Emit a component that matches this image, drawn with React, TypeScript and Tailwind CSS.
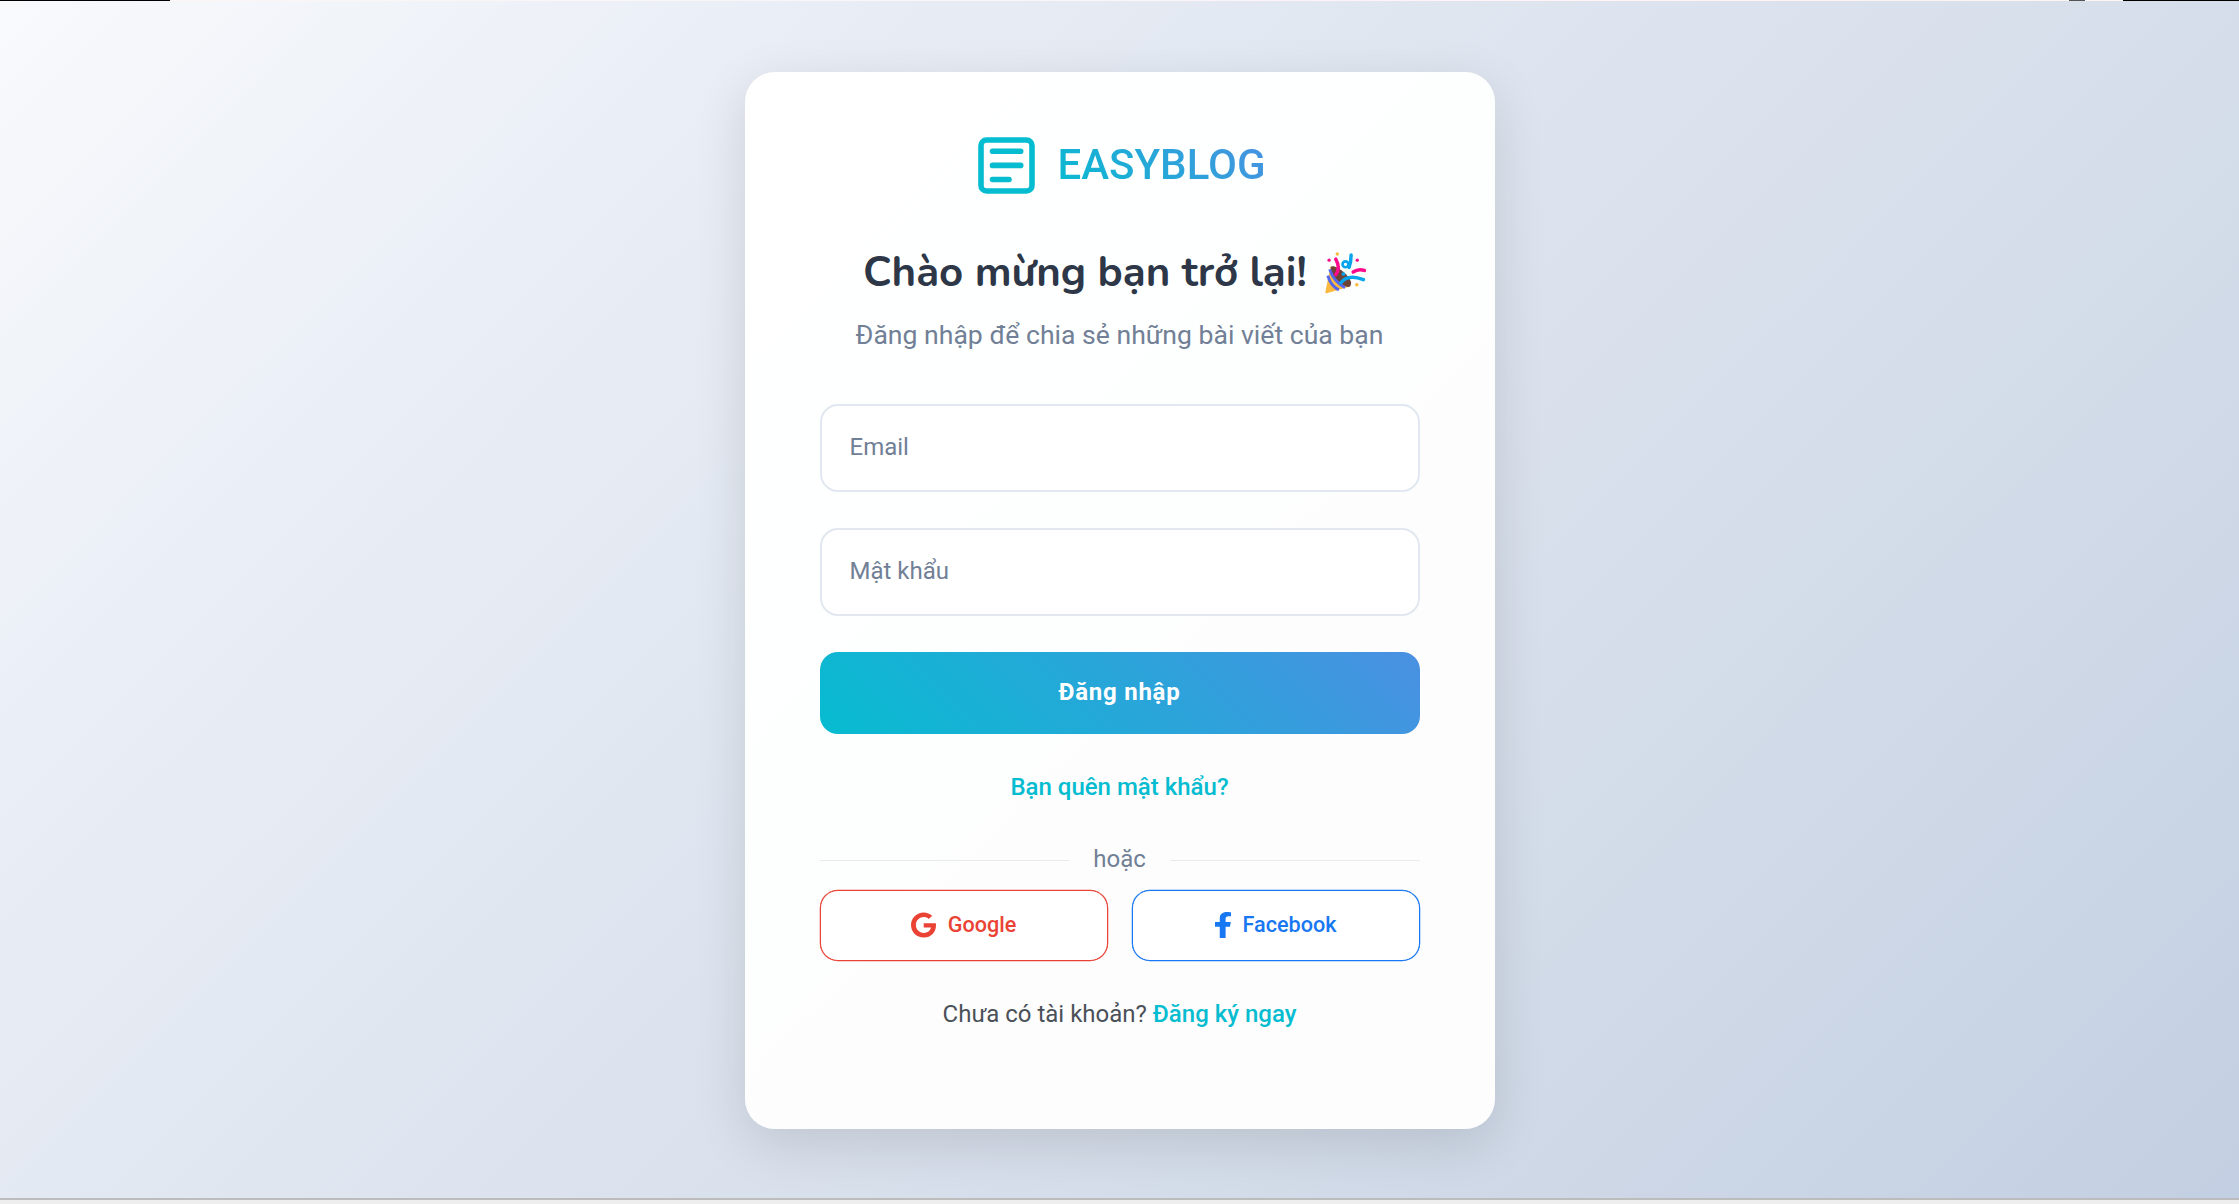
import React from "react";

function Logo() {
  return (
    <svg className="h-[57px] w-[57px]" viewBox="0 0 57 57" fill="none" stroke="#06bcd0" strokeWidth="5.6" strokeLinecap="round">
      <rect x="3" y="3" width="51" height="51" rx="5.5" />
      <path d="M14.5 14.3H42.7M14.5 28.4H42.7M14.5 42.5H31" />
    </svg>
  );
}

function PartyPopper() {
  return (
    <svg className="ml-[17px] h-[42px] w-[44px]" viewBox="0 0 42 41" fill="none" strokeLinecap="round">
      <path d="M6 14C13 17 22 27 24 34L3 40Q0 41 1 38Z" fill="#fcb93f" />
      <path d="M6 15C8 10 25 22 26 30Q26 35 22 34C15 32 6 23 6 15Z" fill="#6d4337" />
      <path d="M3.2 23Q6 33 14 37M5 17Q9 29 20 35" stroke="#5266ef" strokeWidth="2.8" strokeLinecap="butt" />
      <path d="M11 22Q16 16 11 7M28 19.5Q33 16 39 18" stroke="#fb0a8c" strokeWidth="3.4" />
      <path d="M16 30Q23 21 38 27M26 3Q26 10 24 15" stroke="#08a5ed" strokeWidth="3.4" />
      <circle cx="20.5" cy="12" r="2.9" stroke="#08a5ed" strokeWidth="2.6" />
      <circle cx="18.5" cy="21.5" r="1.8" fill="#08a5ed" />
      <g fill="#fb0a8c"><circle cx="4.5" cy="8" r="1.6" /><circle cx="32" cy="8" r="1.6" /></g>
      <g fill="#fcb93f"><circle cx="12.5" cy="2" r="1.7" /><circle cx="31.5" cy="32" r="1.7" /></g>
    </svg>
  );
}

function Field({ label, type }: { label: string; type: string }) {
  return (
    <input
      type={type}
      placeholder={label}
      className="mb-9 h-[88px] w-full rounded-[18px] border-2 border-[#e2e8f0] bg-white px-7 pb-[3px] text-[24px] text-[#718096] placeholder:text-[#718096]"
    />
  );
}

export default function App() {
  return (
    <div className="flex h-[1204px] w-full flex-col overflow-hidden font-[Roboto,sans-serif]">
      <div className="flex h-px shrink-0 justify-between bg-[#fdf5f5]">
        <div className="w-[170px] bg-black" />
        <div className="flex w-[170px]">
          <div className="w-[16px] bg-[#555]" />
          <div className="w-[38px]" />
          <div className="flex-1 bg-black" />
        </div>
      </div>
      <main className="flex flex-1 items-start justify-center bg-[linear-gradient(135deg,#f8fafc_0%,#eaeef6_22%,#dce3ee_50%,#d3dce9_70%,#c3cfe2_100%)] pt-[71px]">
        <section className="flex h-[1057px] w-[750px] flex-col items-center rounded-[30px] bg-[linear-gradient(135deg,#ffffff,#fdfffe_45%,#fdfdfd_60%)] px-[75px] shadow-[0_15px_52px_rgba(0,0,0,0.12)]">
          <div className="mt-[65px] flex h-[57px] items-center gap-[22px] pl-[5px]">
            <Logo />
            <span className="-mt-[2px] bg-[linear-gradient(45deg,#06bcd0,#4a90e2)] bg-clip-text text-[42px] leading-[57px] font-medium text-transparent">
              EASYBLOG
            </span>
          </div>
          <h1 className="mt-[49px] mr-[8px] flex h-[60px] items-center font-[Nunito,'Open_Sans',sans-serif] text-[42px] leading-[60px] font-bold whitespace-nowrap text-[#2d3748]">
            Chào mừng bạn trở lại!
            <PartyPopper />
          </h1>
          <p className="mt-[12px] text-[26.6px] leading-[40px] whitespace-nowrap text-[#718096]">
            Đăng nhập để chia sẻ những bài viết của bạn
          </p>
          <form className="mt-[49px] flex w-full flex-col" onSubmit={(e) => e.preventDefault()}>
            <Field label="Email" type="email" />
            <Field label="Mật khẩu" type="password" />
            <button className="h-[82px] w-full rounded-[18px] bg-[linear-gradient(45deg,#06bcd0,#4a90e2)] pb-[2px] text-[24px] font-bold tracking-[0.75px] text-white">
              Đăng nhập
            </button>
          </form>
          <a className="mt-[35px] text-[24px] leading-[36px] font-medium text-[#06bcd0]">Bạn quên mật khẩu?</a>
          <div className="mt-[36px] flex w-full items-center gap-6 text-[24px] leading-[36px] text-[#718096]">
            <div className="mt-[3px] h-px flex-1 bg-[#e8eaec]" />
            hoặc
            <div className="mt-[3px] h-px flex-1 bg-[#e8eaec]" />
          </div>
          <div className="mt-[13px] grid h-[71px] w-full grid-cols-2 gap-6 text-[21.6px] font-medium">
            <button className="flex items-center justify-center gap-3 rounded-[18px] border-[1.5px] border-[#ea4335] bg-white pb-px text-[#ea4335] ring-[0.25px] ring-[#ea4335]">
              <svg className="h-[26px] w-[25px]" viewBox="0 0 488 512" preserveAspectRatio="none" fill="currentColor">
                <path d="M488 261.8C488 403.3 391.1 504 248 504 110.8 504 0 393.2 0 256S110.8 8 248 8c66.8 0 123 24.5 166.3 64.9l-67.5 64.9C258.5 52.6 94.3 116.6 94.3 256c0 86.5 69.1 156.6 153.7 156.6 98.2 0 135-70.4 140.8-106.9H248v-85.3h236.1c2.3 12.7 3.9 24.9 3.9 41.4z" />
              </svg>
              Google
            </button>
            <button className="flex items-center justify-center gap-3 rounded-[18px] border-[1.5px] border-[#1877f2] bg-white pb-px text-[#1877f2] ring-[0.25px] ring-[#1877f2]">
              <svg className="h-[26px] w-[16px]" viewBox="22.9 0 274.1 512" preserveAspectRatio="none" fill="currentColor">
                <path d="M279.1 288l14.2-92.7h-88.9v-60.1c0-25.4 12.4-50.1 52.2-50.1H297V6.3S260.4 0 225.4 0C152.2 0 104.3 44.4 104.3 124.7v70.6H22.9V288h81.4v224h100.2V288z" />
              </svg>
              Facebook
            </button>
          </div>
          <p className="mt-[35px] text-[24px] leading-[36px] text-[#4a5058]">
            Chưa có tài khoản? <a className="font-medium text-[#06bcd0]">Đăng ký ngay</a>
          </p>
        </section>
      </main>
      <footer className="h-[6px] shrink-0 border-t-2 border-[#bcbcbc] bg-[#eeeeee]" />
    </div>
  );
}
